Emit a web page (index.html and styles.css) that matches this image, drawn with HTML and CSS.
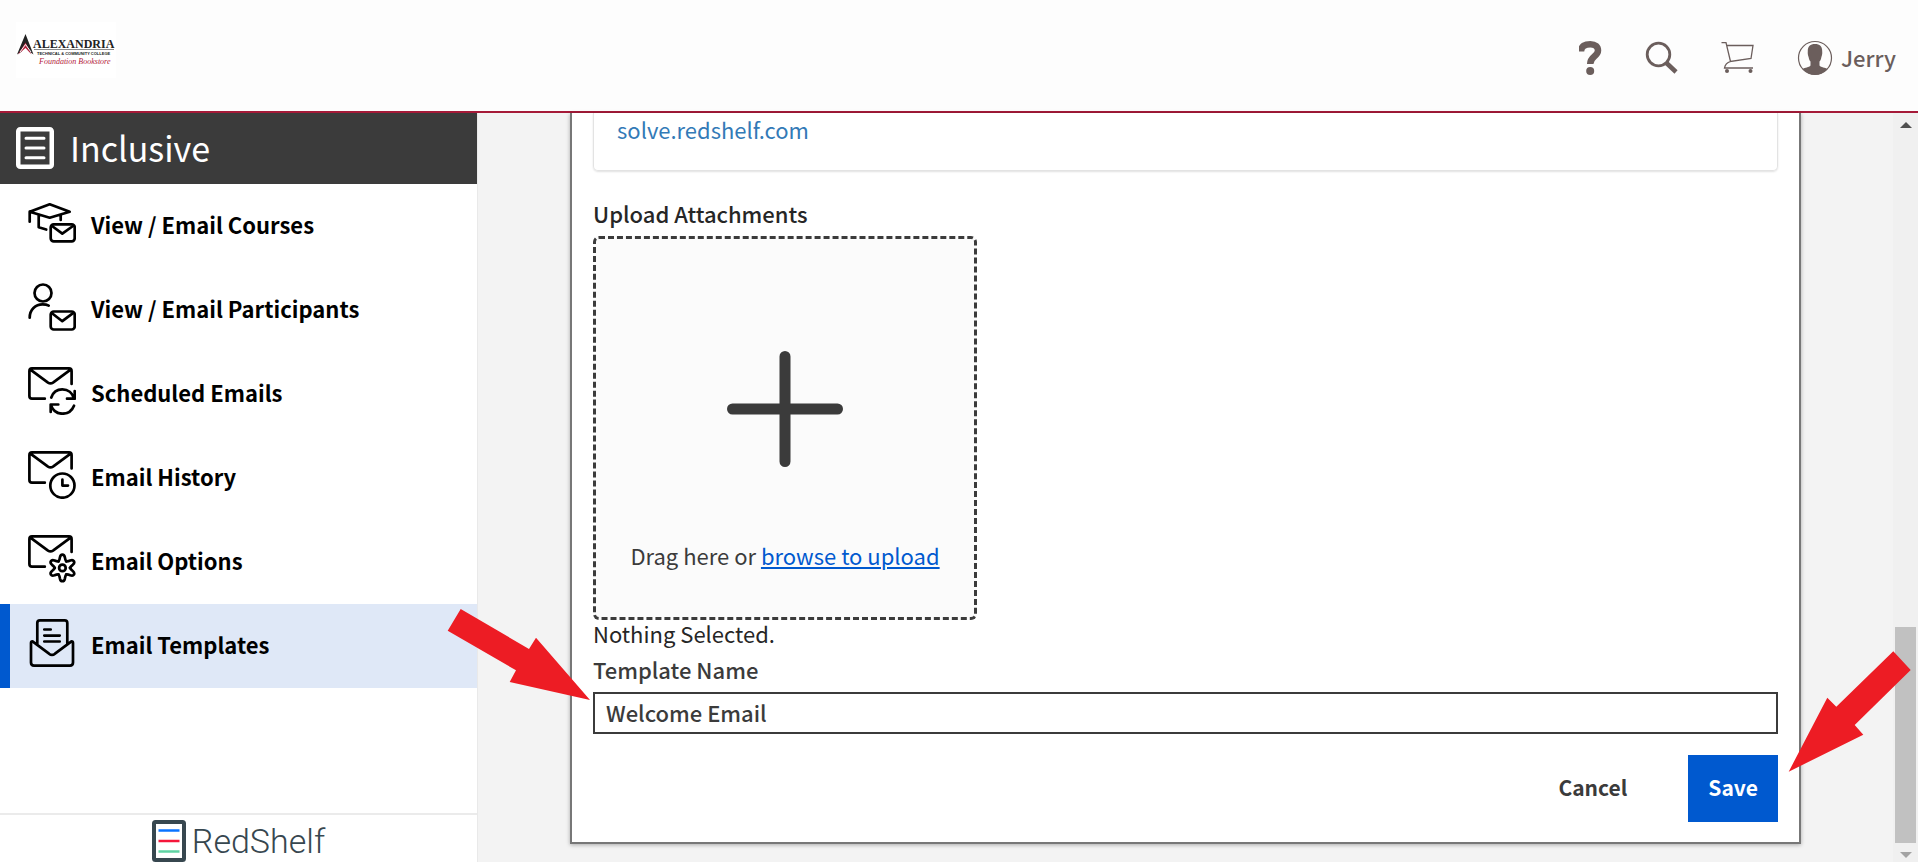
FILE: index.html
```html
<!DOCTYPE html>
<html lang="en">
<head>
<meta charset="utf-8">
<meta name="viewport" content="width=device-width, initial-scale=1">
<title>Inclusive - Email Templates</title>
<link rel="stylesheet" href="styles.css">
</head>
<body class="page">
<header class="topbar">
  <a class="brand" href="#" aria-label="Alexandria Technical &amp; Community College Foundation Bookstore">
    <svg class="brand-logo" viewBox="0 0 100 56">
      <path fill="#222" d="M9.500 12L17.500 32.500L13.500 29.500L9.500 21L5.500 29.500L1 32.500Z"/>
      <path fill="#b3203c" d="M9.500 20.500L15.500 32.500L9.500 26L2 32.500Z"/>
      <path stroke="#fff" stroke-width="1" fill="none" d="M4 30L9.500 22.500L15 30"/>
      <path stroke="#888" stroke-width="1" d="M18 27.500H98"/>
      <text class="brand-name" x="17" y="25.500">ALEXANDRIA</text>
      <text class="brand-sub" x="21" y="33">TECHNICAL &amp; COMMUNITY COLLEGE</text>
      <text class="brand-store" x="23" y="42">Foundation Bookstore</text>
    </svg>
  </a>
  <nav class="tools" aria-label="Account">
    <a class="tool" href="#" aria-label="Help">
      <svg width="24" height="36" viewBox="0 0 24 36"><path fill="none" stroke="#6b5e5c" stroke-width="6.500" d="M2 11.500C2 6 6 4.200 11.300 4.200C16.500 4.200 19 7 19 10.500C19 16.500 11.200 16 11.200 24"/><circle cx="11.200" cy="31" r="4" fill="#6b5e5c"/></svg>
    </a>
    <a class="tool" href="#" aria-label="Search">
      <svg width="34" height="34" viewBox="0 0 34 34" fill="none" stroke="#6b5e5c"><circle cx="13.500" cy="13.500" r="11.300" stroke-width="2.800"/><path stroke-width="4.500" d="M21.500 22L31 31"/></svg>
    </a>
    <a class="tool" href="#" aria-label="Cart">
      <svg width="34" height="34" viewBox="0 0 34 34" fill="none" stroke="#6b5e5c" stroke-width="1.300"><path d="M.500 1.700H5L9.500 20.500L30 17.500L32 4.500H5.700M9.500 20.500C6 21.500 4 24 3.500 27H32"/><circle cx="6" cy="30" r="2" fill="#6b5e5c" stroke="none"/><circle cx="29.500" cy="30" r="2" fill="#6b5e5c" stroke="none"/></svg>
    </a>
    <a class="tool tool-user" href="#">
      <svg width="36" height="36" viewBox="0 0 36 36"><circle cx="18" cy="18" r="16.500" fill="none" stroke="#6b5e5c" stroke-width="1.200"/><path fill="#6b5e5c" d="M18 4C23 4 25.500 6.500 25.200 12C25.500 13.500 24.800 16.500 24.400 17C24 19.500 23.500 20.500 22.500 21.500V25.500C24 27.500 28 27.500 30.500 29A16.500 16.500 0 0 1 5.500 29C8 27.500 12 27.500 13.500 25.500V21.500C12.500 20.500 12 19.500 11.600 17C11.200 16.500 10.500 13.500 10.800 12C10.500 6.500 13 4 18 4Z"/></svg>
      <span class="user-name">Jerry</span>
    </a>
  </nav>
</header>

<div class="body">
  <aside class="sidebar">
    <h1 class="side-title">
      <svg width="38" height="42" viewBox="0 0 38 42" fill="none" stroke="#fff" stroke-linecap="round"><rect x="2.250" y="2.250" width="33.500" height="37.500" rx="2" stroke-width="4.500"/><path stroke-width="3" d="M10 11.200H28M10 21H28M10 30.800H28"/></svg>
      <span>Inclusive</span>
    </h1>
    <nav class="menu" aria-label="Inclusive">
      <a class="item" href="#">
        <svg class="icon" viewBox="0 0 48 48"><path d="M1.700 12.700L21.700 5.300L41.700 12.700L21.700 18.700ZM1.700 12.700V22.700M10.700 16V28.300L18.200 30.500M32.700 16V21"/><rect x="22.700" y="25.300" width="24" height="17" rx="3"/><path d="M24 27L34.300 34.700L45 27"/></svg>
        <span class="item-text">View / Email Courses</span>
      </a>
      <a class="item" href="#">
        <svg class="icon" viewBox="0 0 48 48"><circle cx="15" cy="10" r="8.500"/><path d="M1.700 34.700C1.700 26.500 7.500 21.400 14.500 21.400C17 21.400 19 21.700 20.700 22.600"/><rect x="22.700" y="28.500" width="24" height="18" rx="3"/><path d="M24 30.200L34.300 38.200L45 30.200"/></svg>
        <span class="item-text">View / Email Participants</span>
      </a>
      <a class="item" href="#">
        <svg class="icon" viewBox="0 0 48 48"><path d="M43.600 17V4Q43.600 1.400 41 1.400H4Q1.400 1.400 1.400 4V29Q1.400 31.700 4 31.700H16.800M2.400 2.600L20 15.600Q22.500 17.200 25 15.600L42.600 2.600"/><path d="M23.300 30.500C25 25.500 29 22.400 34.300 22.400C40 22.400 44.500 26 46 31.500M46.700 24V31.700H39M46 38.700C44 43.700 39.500 46.700 34.300 46.700C29 46.700 24.800 43.500 22.700 37.700M22.700 45V37.500H30.300"/></svg>
        <span class="item-text">Scheduled Emails</span>
      </a>
      <a class="item" href="#">
        <svg class="icon" viewBox="0 0 48 48"><path d="M43.600 17.500V4Q43.600 1.400 41 1.400H4Q1.400 1.400 1.400 4V29Q1.400 31.700 4 31.700H16.800M2.400 2.600L20 15.600Q22.500 17.200 25 15.600L42.600 2.600"/><circle cx="34.400" cy="34.600" r="12.100"/><path d="M34.400 28.700V34.600H40"/></svg>
        <span class="item-text">Email History</span>
      </a>
      <a class="item" href="#">
        <svg class="icon" viewBox="0 0 48 48"><path d="M43.600 17V4Q43.600 1.400 41 1.400H4Q1.400 1.400 1.400 4V29Q1.400 31.700 4 31.700H16.800M2.400 2.600L20 15.600Q22.500 17.200 25 15.600L42.600 2.600"/><g transform="translate(34.400 32.900)"><circle r="3.300"/><path id="tooth" d="M-3.800 -6.600Q-2.800 -8 -2.500 -10.500Q-2 -13.300 0 -13.300Q2 -13.300 2.500 -10.500Q2.800 -8 3.800 -6.600"/><use href="#tooth" transform="rotate(60)"/><use href="#tooth" transform="rotate(120)"/><use href="#tooth" transform="rotate(180)"/><use href="#tooth" transform="rotate(240)"/><use href="#tooth" transform="rotate(300)"/></g></svg>
        <span class="item-text">Email Options</span>
      </a>
      <a class="item item-active" href="#" aria-current="page">
        <svg class="icon" viewBox="0 0 48 48"><path d="M9.300 25V4Q9.300 1.400 12 1.400H36.700Q39.300 1.400 39.300 4V25M4.500 22.400L21 34.700Q24 37.200 27 34.700L43.500 22.400Q45 22.400 45 24V43.500Q45 46.600 42 46.600H6Q3 46.600 3 43.500V24Q3 22.400 4.500 22.400ZM16.300 10.500H22.700M16.300 16.600H31.700M16.300 22.500H31.700"/></svg>
        <span class="item-text">Email Templates</span>
      </a>
    </nav>
    <footer class="side-footer">
      <svg width="34" height="42" viewBox="0 0 34 42" fill="none"><rect x="2" y="2" width="30" height="38" rx="1.500" stroke="#37474f" stroke-width="4"/><path stroke="#0a73ff" stroke-width="2.500" d="M6.500 10.500H27.500"/><path stroke="#f5163b" stroke-width="2.500" d="M6.500 21H27.500"/><path stroke="#5fd3a3" stroke-width="2.500" d="M6.500 31.500H27.500"/></svg>
      <span class="wordmark">RedShelf</span>
    </footer>
  </aside>

  <main class="main">
    <form class="card">
      <div class="message"><a class="message-link" href="#">solve.redshelf.com</a></div>
      <h2 class="upload-title">Upload Attachments</h2>
      <div class="dropzone">
        <svg class="plus" viewBox="0 0 116 116"><path d="M58 5.500V110.500M5.500 58H110.500"/></svg>
        <p class="drop-text">Drag here or <a class="browse" href="#">browse to upload</a></p>
      </div>
      <p class="selection">Nothing Selected.</p>
      <label class="field-label" for="template-name">Template Name</label>
      <div class="field">
        <input class="field-input" id="template-name" type="text" value="Welcome Email">
        <svg class="pointer pointer-field" width="144" height="93" viewBox="447 608 144 93"><path d="M460.700 609L529 649L536 637.700L590 700L509.700 682L516 670.300L447.700 630.700Z"/></svg>
      </div>
      <div class="actions">
        <button class="btn btn-plain" type="button">Cancel</button>
        <button class="btn btn-primary" type="button">Save</button>
        <svg class="pointer pointer-save" width="123" height="121" viewBox="1788 651 123 121"><path d="M1893.300 651.300L1910.700 670L1854.700 725L1863.300 734.700L1788.700 771.700L1827.300 697.700L1836.300 706.700Z"/></svg>
      </div>
    </form>
  </main>

  <div class="scrollbar" aria-hidden="true">
    <span class="scroll-arrow scroll-up"></span>
    <span class="scroll-thumb"></span>
    <span class="scroll-arrow scroll-down"></span>
  </div>
</div>
</body>
</html>
```
FILE: styles.css
```css
* {
  box-sizing: border-box;
}

.page {
  margin: 0;
  height: 100vh;
  display: flex;
  flex-direction: column;
  overflow: hidden;
  font-family: "Noto Sans CJK SC", "Noto Sans", sans-serif;
  font-size: 22px;
  line-height: 26px;
  color: #262626;
  background: #f3f3f3;
}

a {
  color: inherit;
  text-decoration: none;
}

/* Top bar */
.topbar {
  flex: none;
  display: flex;
  justify-content: space-between;
  align-items: flex-start;
  height: 113px;
  padding: 22px 22px 0 16px;
  background: #fdfdfd;
  border-bottom: 2px solid #a51a38;
}

.brand {
  display: block;
  background: #fff;
}

.brand-logo {
  display: block;
  width: 100px;
  height: 56px;
}

.brand-name {
  font: bold 12px "Liberation Serif", serif;
  fill: #222;
}

.brand-sub {
  font: bold 4px "Liberation Sans", sans-serif;
  fill: #222;
}

.brand-store {
  font: italic 8px "Liberation Serif", serif;
  fill: #b3203c;
}

.tools {
  display: flex;
  align-items: center;
  height: 36px;
  margin-top: 18px;
  color: #6b5e5c;
  font-weight: 500;
}

.tool {
  display: flex;
  align-items: center;
  margin-left: 42px;
}

.tool-user {
  gap: 8px;
}

.user-name {
  padding-bottom: 2px;
}

.body {
  flex: 1;
  min-height: 0;
  display: flex;
}

/* Sidebar */
.sidebar {
  flex: none;
  width: 478px;
  display: flex;
  flex-direction: column;
  background: #fff;
  border-right: 1px solid #e9e9e9;
}

.side-title {
  flex: none;
  display: flex;
  align-items: center;
  gap: 16px;
  height: 71px;
  margin: 0;
  padding: 0 16px 2px;
  background: #3b3b3b;
  color: #fff;
  font-size: 34px;
  line-height: 40px;
  font-weight: 400;
}

.menu {
  flex: 1;
}

.item {
  display: flex;
  align-items: center;
  gap: 15px;
  height: 84px;
  padding: 0 28px 6px;
  color: #000;
  font-weight: 700;
}

.item-active {
  padding-left: 18px;
  border-left: 10px solid #0059cf;
  background: #dfe8f7;
}

.item-text {
  padding-top: 2px;
}

.icon {
  width: 48px;
  height: 48px;
  fill: none;
  stroke: currentColor;
  stroke-width: 2.700;
  stroke-linecap: round;
  stroke-linejoin: round;
}

.side-footer {
  flex: none;
  display: flex;
  justify-content: center;
  gap: 6px;
  padding-top: 5px;
  border-top: 2px solid #ebebeb;
}

.wordmark {
  font-family: Roboto, sans-serif;
  font-weight: 300;
  font-size: 34px;
  line-height: 42px;
  color: #37474f;
}

/* Template form */
.main {
  flex: 1;
  min-width: 0;
  padding: 0 92px 18px;
}

.card {
  height: 100%;
  display: flex;
  flex-direction: column;
  padding: 0 21px 20px;
  background: #fff;
  border: 2px solid #777;
  border-top: 0;
  box-shadow: 0 1px 4px rgba(0, 0, 0, 0.3);
}

.message {
  height: 58px;
  padding: 3px 23px;
  border: 1px solid #e3e3e3;
  border-top: 0;
  border-radius: 0 0 5px 5px;
  box-shadow: 0 1px 2px rgba(0, 0, 0, 0.12);
}

.message-link {
  color: #337ab7;
}

.upload-title {
  margin: 29px 0 10px;
  font-size: 22px;
  line-height: 26px;
  font-weight: 500;
}

.dropzone {
  display: flex;
  flex-direction: column;
  justify-content: flex-end;
  align-items: center;
  width: 384px;
  height: 384px;
  padding-bottom: 49px;
  background: #fbfbfb;
  border: 3px dashed #3b3b3b;
  border-radius: 6px;
  color: #3b3b3b;
}

.plus {
  width: 116px;
  height: 116px;
  fill: none;
  stroke: #3b3b3b;
  stroke-width: 11;
  stroke-linecap: round;
}

.drop-text {
  margin: 75px 0 0;
}

.browse {
  color: #0059cf;
  text-decoration: underline;
}

.selection {
  margin: 0 0 10px;
}

.field-label {
  margin-bottom: 10px;
  font-weight: 500;
  color: #3b3b3b;
}

.field {
  position: relative;
}

.field-input {
  display: block;
  width: 100%;
  height: 42px;
  padding: 0 11px 3px;
  border: 2px solid #3b3b3b;
  border-radius: 0;
  background: #fff;
  font: inherit;
  font-weight: 500;
  color: #3b3b3b;
}

.actions {
  position: relative;
  display: flex;
  justify-content: flex-end;
  gap: 41px;
  margin-top: 21px;
}

.btn {
  height: 67px;
  padding: 0 20px 4px;
  border: 0;
  font: inherit;
  font-size: 21px;
  font-weight: 700;
  color: #3b3b3b;
  background: transparent;
}

.btn-primary {
  color: #fff;
  background: #0059cf;
}

.pointer {
  position: absolute;
  fill: #ed1c24;
  z-index: 2;
}

.pointer-field {
  right: calc(100% + 2px);
  top: -84px;
}

.pointer-save {
  left: calc(100% + 10px);
  top: -104px;
}

/* Scrollbar */
.scrollbar {
  flex: none;
  display: flex;
  flex-direction: column;
  align-items: center;
  width: 25px;
  padding: 9px 0 4px;
  background: #f0f0f0;
}

.scroll-arrow {
  border: 6px solid transparent;
}

.scroll-up {
  margin-bottom: auto;
  border-top: 0;
  border-bottom-color: #505050;
}

.scroll-down {
  margin-top: 9px;
  border-bottom: 0;
  border-top-color: #a3a3a3;
}

.scroll-thumb {
  width: 21px;
  height: 216px;
  background: #c1c1c1;
}
```
